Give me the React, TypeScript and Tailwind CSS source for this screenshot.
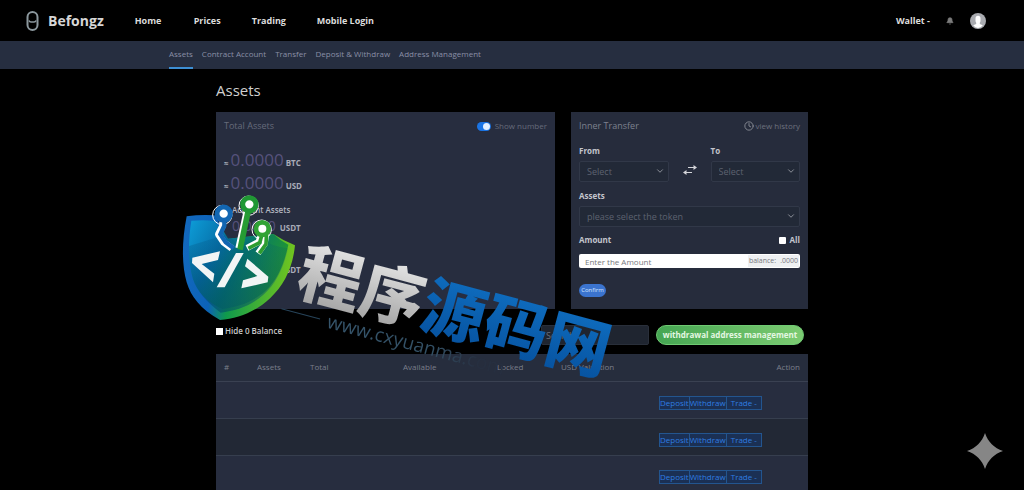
import { useState } from "react";
import { Bell, ChevronDown, Clock } from "lucide-react";

const navLinks = [
  { label: "Home", width: "w-[59px]" },
  { label: "Prices", width: "w-[58px]" },
  { label: "Trading", width: "w-[65px]" },
  { label: "Mobile Login", width: "w-[80px]" },
];

const subLinks = [
  "Assets",
  "Contract Account",
  "Transfer",
  "Deposit & Withdraw",
  "Address Management",
];

function Header() {
  return (
    <header className="flex h-[41px] items-center pr-[38px] pl-[26px]">
      <a href="#" className="flex items-center gap-[9px] text-[#d6d6d6]">
        <svg width="13" height="20" viewBox="0 0 13 20" fill="none" stroke="#8b979d" strokeWidth="2">
          <rect x="1.500" y="1" width="10" height="18" rx="5" />
          <path d="M3 9.500q.5 1.500 2 1.500h3q1.500 0 2-1.500" strokeWidth="1.500" />
        </svg>
        <span className="text-sm font-bold">Befongz</span>
      </a>
      <nav className="ml-[31px] flex text-[9px] font-bold text-[#dcdcdc]">
        {navLinks.map((link) => (
          <a key={link.label} href="#" className={`${link.width} whitespace-nowrap`}>
            {link.label}
          </a>
        ))}
      </nav>
      <div className="ml-auto flex items-center gap-4 text-[#dcdcdc]">
        <button className="text-[9px] font-bold">Wallet -</button>
        <button aria-label="Notifications" className="text-[#7c7c7c]">
          <Bell size={8} fill="currentColor" />
        </button>
        <button aria-label="Profile">
          <svg width="16" height="16" viewBox="0 0 16 16">
            <circle cx="8" cy="8" r="8" fill="#a9abb0" />
            <path d="M5.500 5.500a2.500 2.800 0 0 1 5 0v2.700l-.7 1.500v1.200l3 1.300A7 7 0 0 1 8 15a7 7 0 0 1-4.800-2.800l3-1.300V9.700l-.7-1.500z" fill="#fff" />
          </svg>
        </button>
      </div>
    </header>
  );
}

function SubNav() {
  return (
    <nav className="flex h-7 gap-[9px] bg-[#262e40] pl-[169px] text-[8px] text-[#8a8ea6]">
      {subLinks.map((label, i) => (
        <a
          key={label}
          href="#"
          className={
            i === 0
              ? "flex items-center border-b-2 border-[#3d8fd4] whitespace-nowrap"
              : "flex items-center border-b-2 border-transparent whitespace-nowrap"
          }
        >
          {label}
        </a>
      ))}
    </nav>
  );
}

function BigAmount({ unit }: { unit: string }) {
  return (
    <p className="flex h-[23px] items-baseline gap-[2px] font-bold text-[#a9abb8]">
      <span className="text-[8px]">≈</span>
      <span className="text-[17px] leading-6 font-normal text-[#56527c]">0.0000</span>
      <span className="text-[8px]">{unit}</span>
    </p>
  );
}

function SmallAmount({ title }: { title: string }) {
  return (
    <div className="h-[42px] pl-2">
      <p className="text-[8px] leading-3 font-semibold text-[#b3b5bf]">{title}</p>
      <p className="flex items-baseline gap-1">
        <span className="text-sm leading-5 text-[#56527c]">0.0000</span>
        <span className="text-[8px] font-bold text-[#a9abb8]">USDT</span>
      </p>
    </div>
  );
}

function TotalAssets() {
  const [show, setShow] = useState(true);
  return (
    <section className="min-w-0 flex-1 bg-[#272d3f] px-2 pt-2">
      <div className="flex h-3 items-center justify-between text-[#666b7b]">
        <h2 className="text-[9px]">Total Assets</h2>
        <label className="flex items-center gap-1 text-[8px]">
          <input
            type="checkbox"
            checked={show}
            onChange={(e) => setShow(e.target.checked)}
            className="peer sr-only"
          />
          <span className="flex h-[9px] w-[14px] justify-start rounded-full bg-gray-600 p-px peer-checked:justify-end peer-checked:bg-[#1b74e4]">
            <span className="size-[7px] rounded-full bg-[#e4f0ff]" />
          </span>
          Show number
        </label>
      </div>
      <div className="mt-4">
        <BigAmount unit="BTC" />
        <BigAmount unit="USD" />
      </div>
      <div className="mt-[10px]">
        <SmallAmount title="Account Assets" />
        <SmallAmount title="Contract Assets" />
      </div>
    </section>
  );
}

function SelectBox({ id, label, placeholder }: { id: string; label: string; placeholder: string }) {
  return (
    <div className="min-w-0 flex-1">
      <label htmlFor={id} className="block text-[8px] leading-3 font-bold text-[#c3c5cc]">
        {label}
      </label>
      <div className="relative mt-1">
        <select
          id={id}
          className="block h-[21px] w-full appearance-none rounded-xs border border-[#313848] bg-[#222937] px-[7px] text-[9px] text-[#5d6270]"
        >
          <option>{placeholder}</option>
        </select>
        <ChevronDown size={10} className="pointer-events-none absolute top-[5px] right-1 text-[#a0a3ab]" />
      </div>
    </div>
  );
}

function InnerTransfer() {
  return (
    <section className="w-[237px] bg-[#262c3c] px-2 pt-2 pb-3">
      <div className="flex h-3 items-center justify-between text-[#7d818e]">
        <h2 className="text-[9px]">Inner Transfer</h2>
        <a href="#" className="flex items-center gap-[2px] text-[8px] text-[#6d717e]">
          <Clock size={10} className="text-[#92959e]" />
          view history
        </a>
      </div>
      <div className="mt-[13px] flex">
        <SelectBox id="from" label="From" placeholder="Select" />
        <button aria-label="Swap" className="flex w-[42px] justify-center pt-[20px]">
          <svg width="14" height="10" viewBox="0 0 14 10" fill="none" stroke="#d5d6da" strokeWidth="1.200">
            <path d="M5 2.500h6M3 7.500h6" />
            <path d="M10.500 0L14 2.500 10.500 5zM3.500 5L0 7.500 3.500 10z" fill="#d5d6da" stroke="none" />
          </svg>
        </button>
        <SelectBox id="to" label="To" placeholder="Select" />
      </div>
      <div className="mt-2">
        <SelectBox id="token" label="Assets" placeholder="please select the token" />
      </div>
      <div className="mt-[7px] flex items-center justify-between text-[8px] leading-3 font-bold text-[#c3c5cc]">
        <label htmlFor="amount">Amount</label>
        <label className="flex items-center gap-1">
          <input type="checkbox" className="size-[7px] appearance-none rounded-[1px] bg-white checked:bg-blue-500" />
          All
        </label>
      </div>
      <div className="mt-2 flex h-[14px] items-center overflow-hidden rounded-xs bg-white text-[8px] text-[#77797e]">
        <input
          id="amount"
          placeholder="Enter the Amount"
          className="h-full min-w-0 flex-1 px-[6px] outline-none placeholder:text-[#77797e]"
        />
        <span className="mr-px flex h-3 items-center gap-1 bg-[#eef0f2] px-px text-[7px]">
          <span>balance:</span>
          <span>.0000</span>
        </span>
      </div>
      <button className="mt-4 flex h-[13px] w-[27px] items-center justify-center rounded-full bg-[#3b74cf] text-[6px] text-[#d4e4ff]">
        Confirm
      </button>
    </section>
  );
}

function AssetTable() {
  return (
    <table className="w-full table-fixed border-collapse text-left text-[8px]">
      <thead>
        <tr className="h-[27px] border-b border-[#3a4152] bg-[#262d3d] text-[#7b7f8b]">
          <th className="w-[41px] pl-2 font-normal">#</th>
          <th className="w-[53px] font-normal">Assets</th>
          <th className="w-[93px] font-normal">Total</th>
          <th className="w-[94px] font-normal">Available</th>
          <th className="w-[64px] font-normal">Locked</th>
          <th className="w-[98px] font-normal">USD Valuation</th>
          <th className="pr-2 text-right font-normal">Action</th>
        </tr>
      </thead>
      <tbody>
        {[1, 2, 3].map((row) => (
          <tr key={row} className="h-[37px] border-b border-[#363e4e] bg-[#272d3f] even:bg-[#222835]">
            <td colSpan={6} />
            <td className="pt-[6px]">
              <div className="flex h-[14px] w-[103px] border border-[#23558f] bg-[#1b3054] text-[8px] leading-3 text-[#2f7de0]">
                <button>Deposit</button>
                <button className="border-x border-[#23558f]">Withdraw</button>
                <button className="flex-1 whitespace-nowrap">Trade -</button>
              </div>
            </td>
          </tr>
        ))}
      </tbody>
    </table>
  );
}

function ShieldLogo() {
  return (
    <svg width="114" height="125" viewBox="36 30 342 375" fill="none">
      <defs>
        <linearGradient id="rim" x1="40" y1="200" x2="370" y2="240" gradientUnits="userSpaceOnUse">
          <stop stopColor="#1268bd" />
          <stop offset=".28" stopColor="#0c62b8" />
          <stop offset=".45" stopColor="#0f9a4c" />
          <stop offset="1" stopColor="#72c51f" />
        </linearGradient>
        <linearGradient id="face" x1="60" y1="110" x2="340" y2="260" gradientUnits="userSpaceOnUse">
          <stop stopColor="#0d9bd6" />
          <stop offset=".35" stopColor="#0670a8" />
          <stop offset=".6" stopColor="#05786a" />
          <stop offset="1" stopColor="#249a2c" />
        </linearGradient>
        <linearGradient id="shade" x1="200" y1="150" x2="150" y2="390" gradientUnits="userSpaceOnUse">
          <stop stopColor="#024a78" stopOpacity=".15" />
          <stop offset="1" stopColor="#004a68" stopOpacity=".6" />
        </linearGradient>
      </defs>
      <path
        d="M50 94q42-6 84-3l40 70 136-14q30 20 65 34c-7 68-33 119-74 158-45 42-96 62-151 66C91 372 63 335 50 292c-14-49-16-116 0-198z"
        fill="url(#rim)"
      />
      <path d="M64 107q35-3 70 0l40 54 136-14q18 18 45 32c-13 60-33 106-68 138-38 34-82 49-130 55C111 352 81 320 68 280c-13-45-15-103-4-173z" fill="url(#face)" />
      <path d="M57 183l114-35 29 25 84-7q20 18 70 24c-13 60-37 106-72 138-38 34-82 49-130 55C111 352 81 320 68 280c-8-29-12-62-11-97z" fill="url(#shade)" />
      <g stroke="#fff" strokeLinejoin="round">
        <path d="M158 92v30l-13 26 16 24 24 18M233 68l-27 122" strokeWidth="20" />
        <path d="M277 139l-12 32-34 18M290 139l-6 38-20 28" strokeWidth="18" />
        <circle cx="157" cy="90" r="29" strokeWidth="3" />
        <circle cx="236" cy="62" r="29" strokeWidth="3" />
        <circle cx="275" cy="134" r="29" strokeWidth="3" />
      </g>
      <path d="M163 92v30l-12 26 16 24 24 18" stroke="#1266b2" strokeWidth="13" />
      <path d="M238 62l-28 132" stroke="#269c34" strokeWidth="17" />
      <path d="M279 139l-10 34-34 17M290 139l-2 38-20 28" stroke="#2d9d31" strokeWidth="11" />
      <circle cx="161" cy="86" r="20" fill="#fff" stroke="#1266b2" strokeWidth="15" />
      <circle cx="238" cy="58" r="20" fill="#fff" stroke="#209834" strokeWidth="15" />
      <circle cx="277" cy="131" r="19" fill="#fff" stroke="#31a334" strokeWidth="14" />
      <g fill="#f2f5f5">
        <path d="M67 218l83-19-6 26-49 12 38 29-4 26-63-58z" />
        <path d="M198 204h23l-57 103h-24z" />
        <path d="M232 221l63 54-2 17-79 18 5-24 43-13-37-29z" />
      </g>
    </svg>
  );
}

// Site stamp that lies over the wallet panels
function Watermark() {
  return (
    <div className="pointer-events-none absolute top-[126px] -left-[34px]">
      <ShieldLogo />
      <div className="absolute top-[38px] left-[128px] origin-top-left rotate-[15deg] whitespace-nowrap">
        <p className="font-['Noto_Sans_CJK_SC',sans-serif] text-[64px] leading-[68px] font-black">
          <span className="bg-linear-to-b from-[#f5f5f5] to-[#9c9c9c] bg-clip-text text-transparent">程序</span>
          <span className="bg-linear-to-b from-[#1173c6] to-[#064f9c] bg-clip-text text-transparent">源码网</span>
        </p>
        <p className="-ml-2 flex items-center gap-2 text-[19px] leading-6">
          <span className="h-px w-10 bg-[#27445a]" />
          <span className="bg-linear-to-r from-[#36566d] via-[#324f64] via-60% to-[#262f40] to-85% bg-clip-text text-transparent">
            www.cxyuanma.com
          </span>
        </p>
      </div>
    </div>
  );
}

export default function App() {
  return (
    <div className="relative min-h-screen overflow-hidden bg-black font-['Open_Sans',sans-serif]">
      <Header />
      <SubNav />
      <main className="relative mx-auto max-w-[592px]">
        <h1 className="pt-[9px] text-[15px] leading-6 font-medium text-[#d0d0d0]">Assets</h1>
        <div className="mt-[10px] flex gap-4">
          <TotalAssets />
          <InnerTransfer />
        </div>
        <div className="mt-4 mb-[9px] flex h-5 items-center pr-1">
          <label className="mb-2 flex items-center gap-[2px] text-[8px] leading-3 font-semibold text-[#c9c9c9]">
            <input type="checkbox" className="size-[7px] appearance-none bg-white checked:bg-blue-500" />
            Hide 0 Balance
          </label>
          <input
            aria-label="Search"
            placeholder="Search"
            className="ml-auto h-5 w-[108px] rounded-xs border border-[#292f3a] bg-[#1f2530] px-1 text-[9px] placeholder:text-[#6c717d]"
          />
          <button className="ml-[7px] h-5 w-[148px] rounded-full border border-[#6fca72] bg-linear-to-r from-[#45a653] to-[#7ccb72] text-[8px] font-bold whitespace-nowrap text-[#e4f7e2]">
            withdrawal address management
          </button>
        </div>
        <AssetTable />
        <Watermark />
      </main>
      <svg className="absolute top-[433px] right-[21px]" width="36" height="36" viewBox="0 0 36 36">
        <path d="M18 0C21 9 27 15 36 18 27 21 21 27 18 36 15 27 9 21 0 18 9 15 15 9 18 0z" fill="#868686" />
      </svg>
    </div>
  );
}
